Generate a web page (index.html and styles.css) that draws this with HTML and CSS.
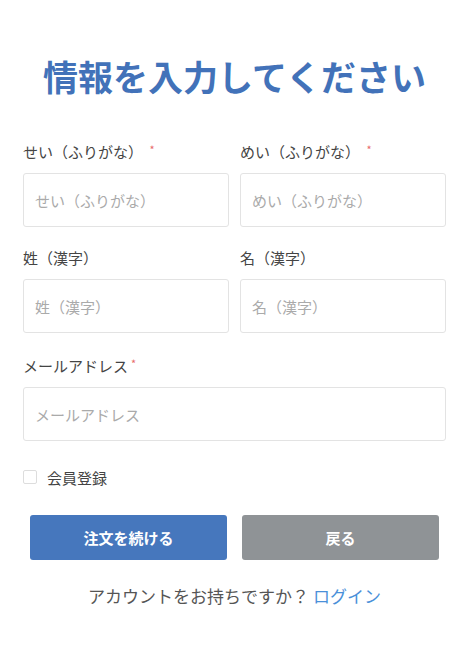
FILE: index.html
```html
<!DOCTYPE html>
<html lang="ja">
<head>
<meta charset="utf-8">
<link rel="stylesheet" href="styles.css">
</head>
<body>
<div class="page">
  <h1 class="title">情報を入力してください</h1>
  <div class="row two">
    <div class="field">
      <label class="label">せい（ふりがな） <span class="req spaced">*</span></label>
      <input class="input" type="text" placeholder="せい（ふりがな）">
    </div>
    <div class="field">
      <label class="label">めい（ふりがな） <span class="req spaced">*</span></label>
      <input class="input" type="text" placeholder="めい（ふりがな）">
    </div>
  </div>
  <div class="row two">
    <div class="field">
      <label class="label">姓（漢字）</label>
      <input class="input" type="text" placeholder="姓（漢字）">
    </div>
    <div class="field">
      <label class="label">名（漢字）</label>
      <input class="input" type="text" placeholder="名（漢字）">
    </div>
  </div>
  <div class="row single">
    <div class="field">
      <label class="label">メールアドレス<span class="req near">*</span></label>
      <input class="input" type="text" placeholder="メールアドレス">
    </div>
  </div>
  <label class="check"><span class="box"></span>会員登録</label>
  <div class="buttons">
    <button class="btn primary">注文を続ける</button>
    <button class="btn secondary">戻る</button>
  </div>
  <p class="footer">アカウントをお持ちですか？ <a class="link" href="#">ログイン</a></p>
</div>
</body>
</html>
```

FILE: styles.css
```css
* { box-sizing: border-box; }
html, body { margin: 0; padding: 0; background: #fff; }
body {
  font-family: "Noto Sans CJK JP", "Noto Sans", sans-serif;
  color: #444;
}
.page {
  padding: 55px 22px 0 23px;
}
.title {
  margin: 0 0 45px;
  font-size: 35px;
  line-height: 42px;
  font-weight: 700;
  color: #4272b9;
  text-align: center;
}
.row { margin-bottom: 21px; }
.row.single { padding-top: 2px; }
.row.two {
  display: grid;
  grid-template-columns: 1fr 1fr;
  column-gap: 11px;
}
.field { display: flex; flex-direction: column; }
.label {
  display: block;
  font-size: 15px;
  line-height: 20px;
  height: 20px;
  margin-bottom: 11px;
  color: #444;
}
.req { color: #e86a6a; font-size: 11px; vertical-align: top; line-height: 14px; }
.req.spaced { margin-left: 3px; }
.req.near { margin-left: 3px; }
.input {
  display: block;
  width: 100%;
  height: 54px;
  border: 1px solid #e3e3e3;
  border-radius: 3px;
  padding: 0 11px;
  font-family: inherit;
  font-size: 15px;
  color: #444;
  outline: none;
  background: #fff;
}
.input::placeholder { color: #aaa; }
.check {
  display: flex;
  align-items: center;
  height: 20px;
  margin-top: 26px;
  font-size: 15px;
  color: #444;
}
.box {
  width: 14px;
  height: 14px;
  border: 1px solid #ddd;
  border-radius: 2px;
  margin-right: 10px;
}
.buttons {
  display: grid;
  grid-template-columns: 1fr 1fr;
  column-gap: 15px;
  padding: 0 7px;
  margin-top: 28px;
}
.btn {
  height: 45px;
  border: none;
  border-radius: 3px;
  color: #fff;
  font-family: inherit;
  font-size: 15px;
  font-weight: 700;
}
.primary { background: #4677bd; }
.secondary { background: #8f9396; }
.footer {
  margin: 26px 0 0;
  text-align: center;
  font-size: 17px;
  line-height: 20px;
  color: #555;
}
.link { color: #4a90d9; text-decoration: none; }
```
